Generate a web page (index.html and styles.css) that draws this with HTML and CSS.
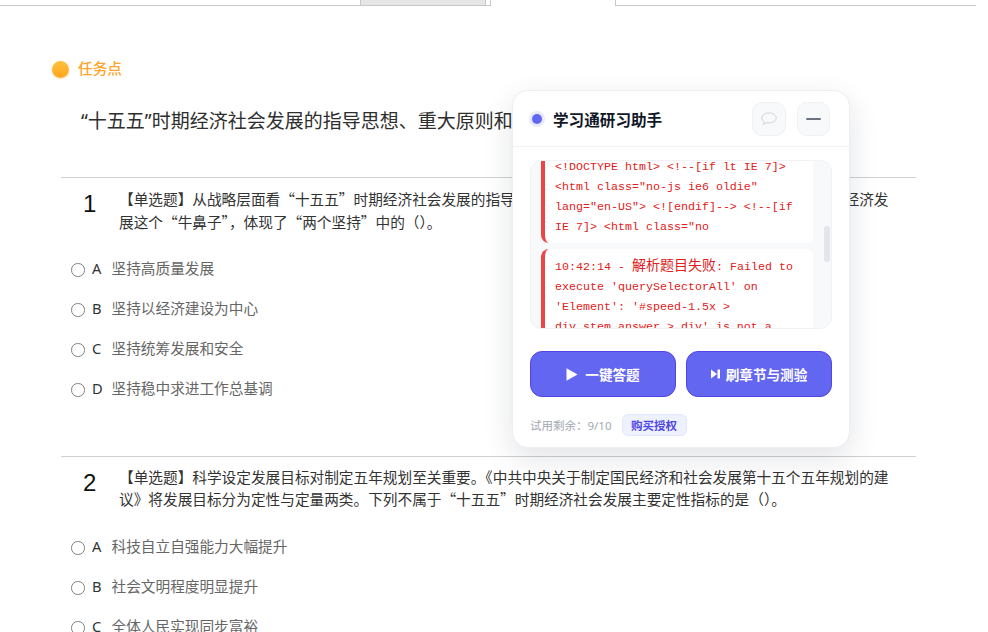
FILE: index.html
```html
<!DOCTYPE html>
<html lang="zh-CN">
<head>
<meta charset="utf-8">
<title>学习通</title>
<link rel="stylesheet" href="styles.css">
</head>
<body>
<div class="tabs">
  <div class="tab-fill tab-fill-left"></div>
  <div class="tab tab-gray"></div>
  <div class="tab-gap"></div>
  <div class="tab tab-active"></div>
  <div class="tab-fill tab-fill-right"></div>
</div>
<main class="work">
  <div class="task"><span class="task-dot"></span><span class="task-label">任务点</span></div>
  <h1 class="work-title">“十五五”时期经济社会发展的指导思想、重大原则和主要目标</h1>

  <section class="question question-first">
    <div class="stem">
      <span class="num">1</span>
      <p class="stem-text">【单选题】从战略层面看“十五五”时期经济社会发展的指导思想，《建议》强调紧紧抓住高质量发展主题，牵住经济发展这个“牛鼻子”，体现了“两个坚持”中的（）。</p>
    </div>
    <ul class="options">
      <li class="option"><span class="radio"></span><span class="letter">A</span><span class="opt-text">坚持高质量发展</span></li>
      <li class="option"><span class="radio"></span><span class="letter">B</span><span class="opt-text">坚持以经济建设为中心</span></li>
      <li class="option"><span class="radio"></span><span class="letter">C</span><span class="opt-text">坚持统筹发展和安全</span></li>
      <li class="option"><span class="radio"></span><span class="letter">D</span><span class="opt-text">坚持稳中求进工作总基调</span></li>
    </ul>
  </section>

  <section class="question">
    <div class="stem">
      <span class="num">2</span>
      <p class="stem-text">【单选题】科学设定发展目标对制定五年规划至关重要。《中共中央关于制定国民经济和社会发展第十五个五年规划的建议》将发展目标分为定性与定量两类。下列不属于“十五五”时期经济社会发展主要定性指标的是（）。</p>
    </div>
    <ul class="options">
      <li class="option"><span class="radio"></span><span class="letter">A</span><span class="opt-text">科技自立自强能力大幅提升</span></li>
      <li class="option"><span class="radio"></span><span class="letter">B</span><span class="opt-text">社会文明程度明显提升</span></li>
      <li class="option"><span class="radio"></span><span class="letter">C</span><span class="opt-text">全体人民实现同步富裕</span></li>
    </ul>
  </section>
</main>

<aside class="panel">
  <header class="panel-head">
    <span class="status-dot"></span>
    <span class="panel-title">学习通研习助手</span>
    <button class="icon-btn icon-btn-chat" type="button">
      <svg width="18" height="16" viewBox="0 0 18 16"><path d="M9 2C4.9 2 1.800 4.200 1.800 7c0 1.600 1 3 2.700 3.900-.1.900-.6 1.700-1.300 2.400 1.500-.2 2.800-.8 3.700-1.600.7.100 1.400.2 2.100.2 4.100 0 7.200-2.200 7.200-4.900S13.100 2 9 2z" fill="none" stroke="#cfd2d8" stroke-width="1"/></svg>
    </button>
    <button class="icon-btn icon-btn-min" type="button"><span class="min-bar"></span></button>
  </header>
  <div class="log-wrap">
    <div class="log">
      <div class="log-item log-item-cut">&lt;!DOCTYPE html&gt; &lt;!--[if lt IE 7]&gt; &lt;html class="no-js ie6 oldie" lang="en-US"&gt; &lt;![endif]--&gt; &lt;!--[if IE 7]&gt; &lt;html class="no</div>
      <div class="log-item">10:42:14 - <span class="cjk">解析题目失败</span>: Failed to execute 'querySelectorAll' on 'Element': '#speed-1.5x &gt; div.stem_answer &gt; div' is not a valid selector.</div>
    </div>
    <div class="scroll-track"><div class="scroll-thumb"></div></div>
  </div>
  <div class="actions">
    <button class="action" type="button">
      <svg class="action-play" width="12" height="13" viewBox="0 0 12 13"><path d="M0.500 0.300 L11.500 6.500 L0.500 12.700 Z" fill="#fff"/></svg>
      <span>一键答题</span>
    </button>
    <button class="action" type="button">
      <svg class="action-skip" width="9" height="10" viewBox="0 0 9 10"><path d="M0 0.500 L6 5 L0 9.500 Z M6.500 0.500 H9 V9.500 H6.500 Z" fill="#fff"/></svg>
      <span>刷章节与测验</span>
    </button>
  </div>
  <footer class="panel-foot">
    <span class="trial">试用剩余：9/10</span>
    <span class="buy">购买授权</span>
  </footer>
</aside>
</body>
</html>
```
FILE: styles.css
```css
* { box-sizing: border-box; }
html, body { margin: 0; height: 100%; overflow: hidden; }
body {
  background: #fff;
  color: #333;
  font-family: "Noto Sans", "Noto Sans CJK SC", sans-serif;
  width: 988px;
  height: 632px;
  position: relative;
}

/* top tab strip */
.tabs { display: flex; width: 976px; height: 6px; }
.tab-fill { border-bottom: 1px solid #c8c8c8; }
.tab-fill-left { width: 360px; }
.tab-fill-right { flex: 1; }
.tab { height: 6px; }
.tab-gray { width: 126px; background: #e6e6e6; border: 1px solid #c8c8c8; border-top: 0; }
.tab-gap { width: 5px; border-bottom: 1px solid #c8c8c8; border-right: 1px solid #c8c8c8; }
.tab-active { width: 125px; border-right: 1px solid #c8c8c8; background: #fff; }

/* work area */
.work { width: 855px; margin-left: 61px; }
.task { display: flex; align-items: center; margin: 54px 0 0 -9px; height: 18px; }
.task-dot {
  width: 17px; height: 17px; border-radius: 50%;
  background: linear-gradient(180deg, #ffc13d 0%, #ffa51f 100%);
  box-shadow: 0 1px 2px rgba(255, 170, 40, .35);
}
.task-label { margin-left: 9px; padding-bottom: 2px; font-size: 14.67px; font-weight: 500; color: #ffa32a; line-height: 18px; }
.work-title {
  margin: 29px 0 0 20px;
  font-size: 19px; line-height: 28px; font-weight: 400; color: #2e2e2e;
  white-space: nowrap;
}
.question { border-top: 1px solid #d0d0d0; padding-top: 9px; }
.question-first { margin-top: 42px; }
.stem { display: flex; }
.num { width: 58px; padding-left: 22px; font-family: "Liberation Sans", sans-serif; font-size: 24px; line-height: 34px; color: #111; }
.stem-text { margin: 0; flex: 1; max-width: 773px; font-family: "Noto Sans CJK SC", sans-serif; font-size: 14.67px; line-height: 22px; color: #333; }
.question-first .stem-text { line-height: 23px; }
.options { list-style: none; margin: 15px 0 0; padding: 0 0 0 10px; }
.option { display: flex; align-items: center; height: 40px; }
.question-first .options { margin-top: 14px; margin-bottom: 49px; }
.radio { width: 13.5px; height: 13.5px; margin-top: 6px; border: 1px solid #808080; border-radius: 50%; background: #fff; }
.letter { margin-left: 7.5px; margin-top: 2px; width: 19.5px; font-size: 14.67px; color: #333; }
.opt-text { font-size: 14.67px; color: #666; }

/* floating helper */
.panel {
  position: absolute; left: 512px; top: 90px;
  width: 338px; height: 358px;
  background: #fff;
  border: 1px solid #eceef2;
  border-radius: 16px;
  box-shadow: 0 10px 30px rgba(20, 25, 50, .12);
}
.panel-head {
  display: flex; align-items: center;
  height: 56px; padding: 0 19px 0 17px;
  border-bottom: 1px solid #f1f2f5;
}
.status-dot {
  width: 10px; height: 10px; border-radius: 50%;
  background: #6366f1; box-shadow: 0 0 0 3px #e9eafd;
  margin-left: 2px;
}
.panel-title { margin-left: 11px; flex: 1; font-family: "Noto Sans CJK SC", sans-serif; font-size: 15.6px; font-weight: 700; color: #111827; }
.icon-btn {
  display: flex; align-items: center; justify-content: center; padding: 0;
  width: 34px; height: 34px; border-radius: 10px;
  background: #f8f9fb; border: 1px solid #f0f1f5;
}
.icon-btn-min { margin-left: 11px; width: 33px; }
.min-bar { width: 15px; height: 2px; background: #6b7280; border-radius: 1px; }
.log-wrap {
  display: flex; margin: 13px 0 0 17px; width: 302px; height: 169px;
  padding-left: 10px;
  background: #f8f9fb; border: 1px solid #f1f2f5; border-radius: 12px;
  overflow: hidden;
}
.log { width: 273px; height: 167px; display: flex; flex-direction: column; gap: 6px; overflow: hidden; }
.log-item {
  flex: none; width: 273px; padding: 5px 8px 6px 10px;
  background: #fff; border-left: 4px solid #ef4444; border-radius: 8px;
  font-family: "Liberation Mono", monospace; font-size: 11.67px; line-height: 20px; color: #e02020;
  overflow-wrap: break-word;
}
.log-item-cut { margin-top: -4px; padding-top: 0; border-radius: 0 0 8px 8px; height: 86px; }
.cjk { font-family: "Noto Sans CJK SC", sans-serif; font-size: 14px; line-height: 20px; }
.scroll-track { flex: none; width: 7px; margin-left: 11px; padding-top: 65px; }
.scroll-thumb { width: 6px; height: 36px; background: #e3e5ea; border-radius: 3px; }
.actions { display: flex; gap: 10px; margin: 22px 0 0 17px; width: 302px; }
.action {
  flex: 1; height: 46px; display: flex; align-items: center; justify-content: center; gap: 7px;
  background: #6366f1; border: 1px solid #4f46e5; border-radius: 12px;
  color: #fff; font-family: "Noto Sans CJK SC", sans-serif; font-size: 13.6px; font-weight: 700; padding: 0;
}
.action-skip { margin-right: -1px; }
.panel-foot { display: flex; align-items: center; margin: 17px 0 0 17px; }
.trial { font-size: 11.5px; color: #a3a8b2; }
.buy {
  margin-left: 10px; height: 22px; padding: 0 8.5px;
  display: flex; align-items: center;
  background: #eef2ff; border: 1px solid #e0e7ff; border-radius: 6px;
  font-family: "Noto Sans CJK SC", sans-serif; font-size: 11.5px; font-weight: 700; color: #4f46e5;
}
```
